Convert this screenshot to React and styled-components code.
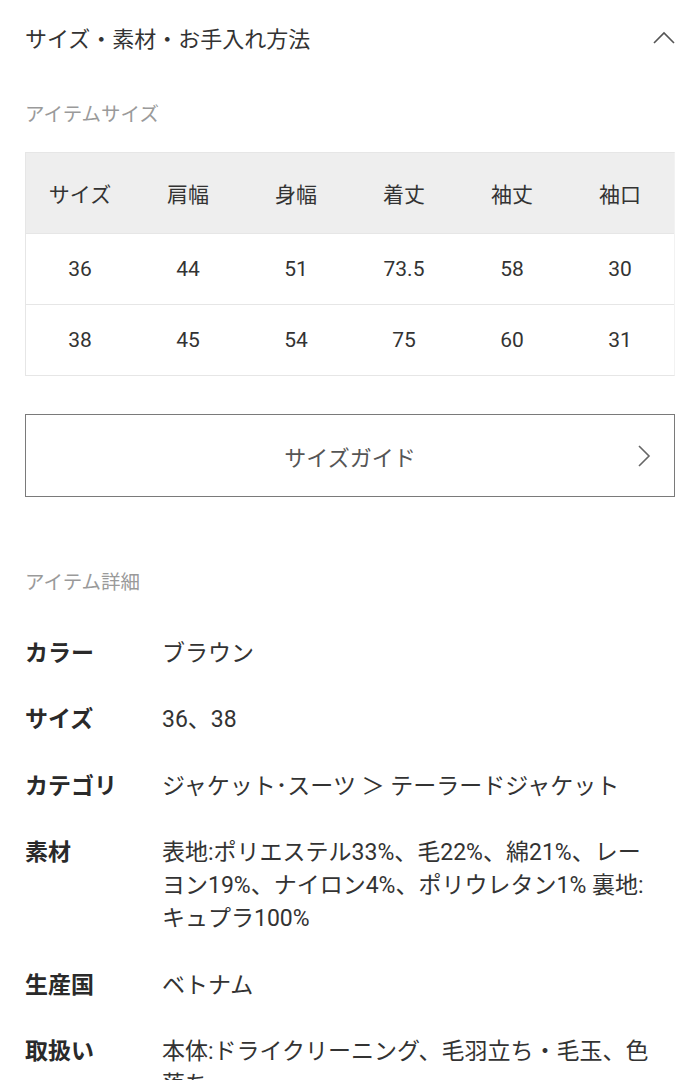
import React from "react";
import styled, { createGlobalStyle } from "styled-components";

const Global = createGlobalStyle`
  html, body { margin: 0; padding: 0; background: #fff; }
  body { font-family: Roboto, "Noto Sans CJK JP", sans-serif; color: #333; }
`;

const Page = styled.div`
  width: 700px;
  padding: 0 25px;
  box-sizing: border-box;
`;

const Header = styled.div`
  height: 78px;
  box-sizing: border-box;
  padding-bottom: 4px;
  display: flex;
  align-items: center;
  justify-content: space-between;
  font-size: 22px;
  color: #333;
`;

const SectionTitle = styled.div`
  font-size: 19.5px;
  line-height: 30px;
  color: #9a9a9a;
  margin-top: ${(p) => p.$top}px;
`;

const Table = styled.div`
  margin-top: 22px;
  border: 1px solid #e6e6e6;
  border-right-color: #f2f2f2;
`;

const TRow = styled.div`
  display: grid;
  grid-template-columns: repeat(6, 1fr);
  align-items: center;
  height: ${(p) => (p.$head ? 80 : 70)}px;
  background: ${(p) => (p.$head ? "#eeeeee" : "#fff")};
  border-top: ${(p) => (p.$head ? "none" : "1px solid #e6e6e6")};
`;

const Cell = styled.div`
  text-align: center;
  font-size: 21px;
  color: #333;
`;

const GuideButton = styled.div`
  margin-top: 38px;
  height: 83px;
  box-sizing: border-box;
  border: 1.5px solid #7a7a7a;
  display: flex;
  align-items: center;
  justify-content: center;
  position: relative;
  font-size: 22px;
  color: #555;
`;

const ButtonArrow = styled.svg`
  position: absolute;
  right: 23px;
  top: 50%;
  transform: translateY(-50%);
`;

const DetailList = styled.div`
  margin-top: 39px;
  display: flex;
  flex-direction: column;
  gap: 33px;
`;

const DRow = styled.div`
  display: grid;
  grid-template-columns: 137px 495px;
  font-size: 23px;
  line-height: 33.3px;
`;

const Label = styled.div`
  font-weight: 700;
  color: #2a2a2a;
`;

const Value = styled.div`
  color: #333;
`;

const head = ["サイズ", "肩幅", "身幅", "着丈", "袖丈", "袖口"];
const rows = [
  ["36", "44", "51", "73.5", "58", "30"],
  ["38", "45", "54", "75", "60", "31"],
];

const details = [
  ["カラー", "ブラウン"],
  ["サイズ", "36、38"],
  ["カテゴリ", "ジャケット･スーツ ＞ テーラードジャケット"],
  ["素材", "表地:ポリエステル33%、毛22%、綿21%、レーヨン19%、ナイロン4%、ポリウレタン1% 裏地:キュプラ100%"],
  ["生産国", "ベトナム"],
  ["取扱い", "本体:ドライクリーニング、毛羽立ち・毛玉、色落ち"],
];

export default function App() {
  return (
    <>
      <Global />
      <Page>
        <Header>
          <span>サイズ・素材・お手入れ方法</span>
          <svg width="22" height="13" viewBox="0 0 22 13">
            <polyline points="1,12 11,2 21,12" fill="none" stroke="#555" strokeWidth="1.6" />
          </svg>
        </Header>
        <SectionTitle $top={22}>アイテムサイズ</SectionTitle>
        <Table>
          <TRow $head>
            {head.map((h) => (
              <Cell key={h}>{h}</Cell>
            ))}
          </TRow>
          {rows.map((r, i) => (
            <TRow key={i}>
              {r.map((c, j) => (
                <Cell key={j}>{c}</Cell>
              ))}
            </TRow>
          ))}
        </Table>
        <GuideButton>
          サイズガイド
          <ButtonArrow width="14" height="24" viewBox="0 0 14 24">
            <polyline points="2,2 12,12 2,22" fill="none" stroke="#666" strokeWidth="1.6" />
          </ButtonArrow>
        </GuideButton>
        <SectionTitle $top={71}>アイテム詳細</SectionTitle>
        <DetailList>
          {details.map(([l, v]) => (
            <DRow key={l}>
              <Label>{l}</Label>
              <Value>{v}</Value>
            </DRow>
          ))}
        </DetailList>
      </Page>
    </>
  );
}
